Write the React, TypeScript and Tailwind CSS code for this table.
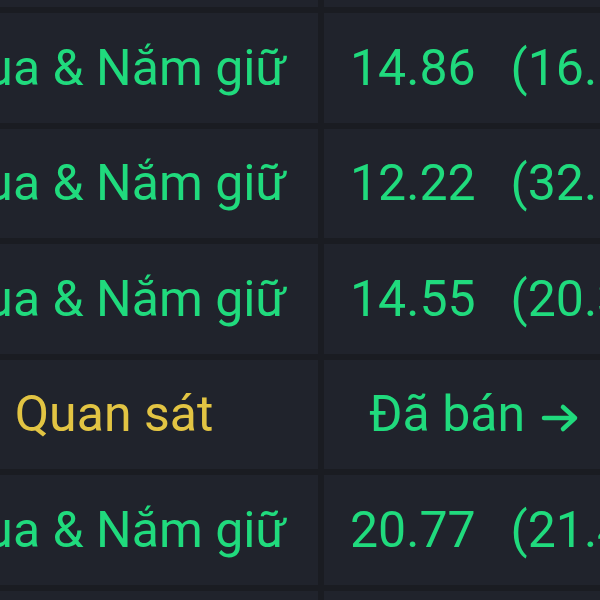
import React from 'react';

type Row = {
  label: string;
  watch?: boolean;
  value?: string;
  change?: string;
  sold?: boolean;
};

const ROWS: Row[] = [
  { label: '' },
  { label: 'Mua & Nắm giữ', value: '14.86', change: '(16.54%)' },
  { label: 'Mua & Nắm giữ', value: '12.22', change: '(32.10%)' },
  { label: 'Mua & Nắm giữ', value: '14.55', change: '(20.37%)' },
  { label: 'Quan sát', watch: true, sold: true },
  { label: 'Mua & Nắm giữ', value: '20.77', change: '(21.48%)' },
  { label: '' },
];

function ArrowRight() {
  return (
    <svg
      width="38"
      height="30"
      viewBox="0 0 38 30"
      className="inline-block ml-[16px] align-[-2px]"
      fill="none"
      stroke="currentColor"
      strokeWidth="4.5"
      strokeLinecap="round"
      strokeLinejoin="round"
    >
      <path d="M3 15h31M22 4l12 11-12 11" />
    </svg>
  );
}

export default function App() {
  return (
    <div className="w-[600px] h-[600px] overflow-hidden bg-[#1a1c22] font-['Roboto','Liberation_Sans',sans-serif]">
      <div className="ml-[-90px] mt-[-102.5px] grid grid-cols-[408px_300px] gap-[6px] blur-[0.5px]">
        {ROWS.map((row, i) => (
          <React.Fragment key={i}>
            <div className="h-[109.5px] bg-[#20232c] flex items-center justify-center whitespace-nowrap">
              <span
                className={
                  'text-[50px] leading-[50px] ' +
                  (row.watch ? 'text-[#e2c443]' : 'text-[#20da7d]')
                }
              >
                {row.label}
              </span>
            </div>
            <div className="h-[109.5px] bg-[#20232c] px-[26px] flex items-center overflow-hidden whitespace-nowrap text-center">
              <div className="w-full text-[50px] leading-[50px] text-[#20da7d]">
                {row.sold ? (
                  <span>
                    Đã bán
                    <ArrowRight />
                  </span>
                ) : row.value ? (
                  <span>
                    {row.value}
                    <span className="ml-[35px]">{row.change}</span>
                  </span>
                ) : null}
              </div>
            </div>
          </React.Fragment>
        ))}
      </div>
    </div>
  );
}
